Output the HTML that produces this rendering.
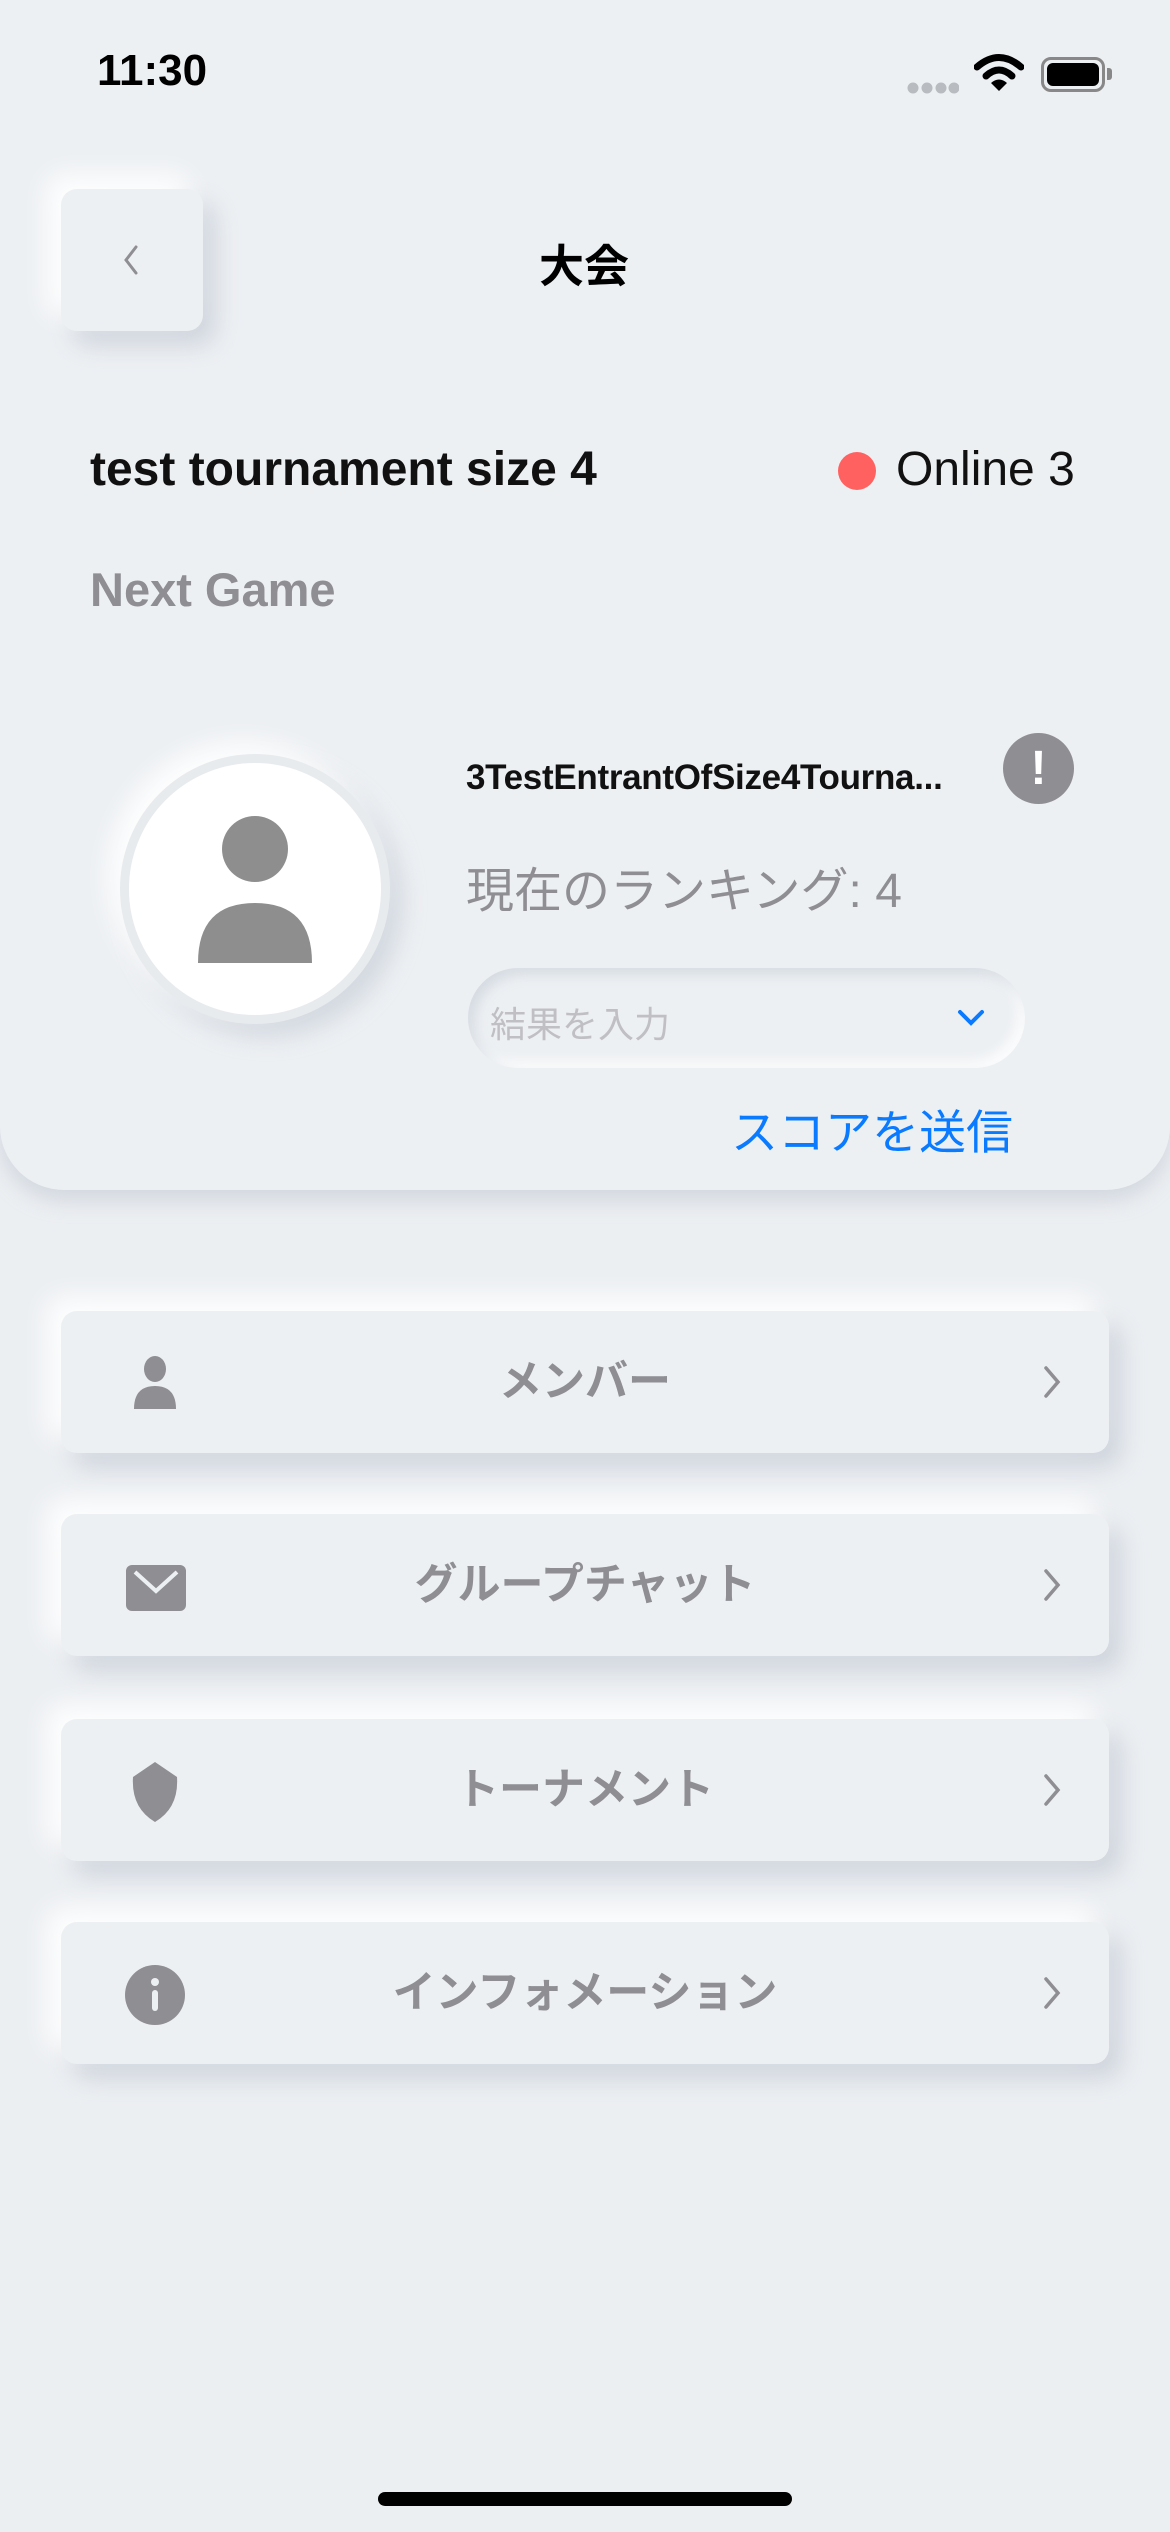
<!DOCTYPE html>
<html><head><meta charset="utf-8"><style>
*{margin:0;padding:0;box-sizing:border-box}
body{width:1170px;height:2532px;background:#eceff2;position:relative;overflow:hidden;font-family:"Liberation Sans","Noto Sans CJK JP",sans-serif}
.a{position:absolute}
.panel{position:absolute;left:0;top:0;width:1170px;height:1190px;background:#edf0f3;border-radius:0 0 64px 64px;box-shadow:0 10px 22px rgba(160,170,185,0.35)}
.card{position:absolute;left:61px;width:1048px;height:142px;background:#edf0f3;border-radius:16px;box-shadow:-14px -14px 26px rgba(255,255,255,0.95),12px 14px 24px rgba(170,180,195,0.45)}
.lbl{position:absolute;left:0;right:0;top:0;line-height:142px;text-align:center;font-size:43px;font-weight:bold;color:#8e8e93}
.chev{position:absolute;left:980px;top:54px}
.ic{position:absolute;left:64px;top:41px}
</style></head><body>
<div class="panel"></div>
<div class="a" style="left:97px;top:46px;font-size:44px;font-weight:bold;color:#000">11:30</div>
<div class="a" style="left:907px;top:81px;">
<svg width="52" height="12"><circle cx="6" cy="6" r="5.5" fill="#b8bbbf"/><circle cx="20" cy="6" r="5.5" fill="#b8bbbf"/><circle cx="34" cy="6" r="5.5" fill="#b8bbbf"/><circle cx="47" cy="6" r="5.5" fill="#b8bbbf"/></svg></div>
<svg class="a" style="left:974px;top:54px" width="50" height="38" viewBox="0 0 50 38"><path d="M3 13 Q25 -6 47 13" stroke="#000" stroke-width="7" fill="none" stroke-linecap="round"/><path d="M12 22 Q25 10 38 22" stroke="#000" stroke-width="7" fill="none" stroke-linecap="round"/><path d="M17 29 L25 37 L33 29 Q25 22 17 29Z" fill="#000"/></svg>
<div class="a" style="left:1041px;top:57px;width:64px;height:35px;border:3px solid #888;border-radius:10px;padding:3px"><div style="width:100%;height:100%;background:#000;border-radius:6px"></div></div>
<div class="a" style="left:1107px;top:68px;width:5px;height:12px;background:#888;border-radius:0 3px 3px 0"></div>

<div class="a" style="left:61px;top:189px;width:142px;height:142px;border-radius:16px;background:#edf0f3;box-shadow:-14px -14px 26px rgba(255,255,255,0.95),12px 14px 24px rgba(170,180,195,0.45)"></div>
<svg class="a" style="left:120px;top:244px" width="22" height="32"><path d="M16 3 L6 16 L16 29" stroke="#8e8e93" stroke-width="3" fill="none" stroke-linecap="round"/></svg>
<div class="a" style="left:484px;top:230px;width:200px;text-align:center;font-size:45px;font-weight:bold;color:#000">大会</div>

<div class="a" style="left:90px;top:442px;font-size:48px;font-weight:bold;color:#111">test tournament size 4</div>
<div class="a" style="left:838px;top:452px;width:38px;height:38px;border-radius:50%;background:#ff6161"></div>
<div class="a" style="left:896px;top:442px;font-size:48px;color:#111">Online 3</div>
<div class="a" style="left:90px;top:562px;font-size:47px;font-weight:bold;color:#8e8e93">Next Game</div>

<div class="a" style="left:120px;top:754px;width:270px;height:270px;border-radius:50%;background:#fff;border:9px solid #e8ebee;box-shadow:-12px -12px 24px rgba(255,255,255,0.9),12px 12px 24px rgba(170,180,195,0.4)"></div>
<svg class="a" style="left:195px;top:815px" width="120" height="155"><ellipse cx="60" cy="34" rx="33" ry="33" fill="#8e8e8e"/><path d="M3 148 Q3 88 60 88 Q117 88 117 148 Z" fill="#8e8e8e"/></svg>

<div class="a" style="left:466px;top:758px;font-size:35px;font-weight:bold;color:#111;letter-spacing:-0.3px;white-space:nowrap">3TestEntrantOfSize4Tourna...</div>
<div class="a" style="left:1003px;top:733px;width:71px;height:71px;border-radius:50%;background:#8e8e93;color:#fff;text-align:center;font-size:48px;font-weight:bold;line-height:71px">!</div>
<div class="a" style="left:466px;top:851px;font-size:48px;color:#8e8e93">現在のランキング: 4</div>
<div class="a" style="left:468px;top:968px;width:557px;height:100px;border-radius:50px;background:#edf0f3;box-shadow:inset 6px 6px 12px rgba(170,180,195,0.35),inset -6px -6px 12px rgba(255,255,255,0.9)"></div>
<div class="a" style="left:490px;top:996px;font-size:36px;color:#c0c0c4">結果を入力</div>
<svg class="a" style="left:956px;top:1008px" width="30" height="20"><path d="M4 4 L15 15 L26 4" stroke="#0a7aff" stroke-width="4" fill="none" stroke-linecap="round"/></svg>
<div class="a" style="left:731px;top:1094px;font-size:47px;color:#0a7aff">スコアを送信</div>

<div class="card" style="top:1311px"><svg class="ic" width="60" height="60"><ellipse cx="30" cy="17" rx="11" ry="13" fill="#8e8e93"/><path d="M9 57 Q9 34 30 34 Q51 34 51 57Z" fill="#8e8e93"/></svg><div class="lbl">メンバー</div><svg class="chev" width="24" height="34"><path d="M5 3 L17 17 L5 31" stroke="#8e8e93" stroke-width="3.5" fill="none" stroke-linecap="round"/></svg></div>
<div class="card" style="top:1514px"><svg class="ic" width="64" height="60"><rect x="1" y="10" width="60" height="46" rx="6" fill="#8e8e93"/><path d="M10 17 L31 36 L52 17" stroke="#edf0f3" stroke-width="4" fill="none"/></svg><div class="lbl">グループチャット</div><svg class="chev" width="24" height="34"><path d="M5 3 L17 17 L5 31" stroke="#8e8e93" stroke-width="3.5" fill="none" stroke-linecap="round"/></svg></div>
<div class="card" style="top:1719px"><svg class="ic" width="60" height="64"><path d="M30 2 L52 17 Q54 48 30 62 Q6 48 8 17Z" fill="#8e8e93"/></svg><div class="lbl">トーナメント</div><svg class="chev" width="24" height="34"><path d="M5 3 L17 17 L5 31" stroke="#8e8e93" stroke-width="3.5" fill="none" stroke-linecap="round"/></svg></div>
<div class="card" style="top:1922px"><svg class="ic" width="64" height="64"><circle cx="30" cy="32" r="30" fill="#8e8e93"/><circle cx="30" cy="19" r="4" fill="#edf0f3"/><rect x="27" y="27" width="6" height="21" rx="3" fill="#edf0f3"/></svg><div class="lbl">インフォメーション</div><svg class="chev" width="24" height="34"><path d="M5 3 L17 17 L5 31" stroke="#8e8e93" stroke-width="3.5" fill="none" stroke-linecap="round"/></svg></div>

<div class="a" style="left:378px;top:2492px;width:414px;height:14px;border-radius:7px;background:#000"></div>
</body></html>
